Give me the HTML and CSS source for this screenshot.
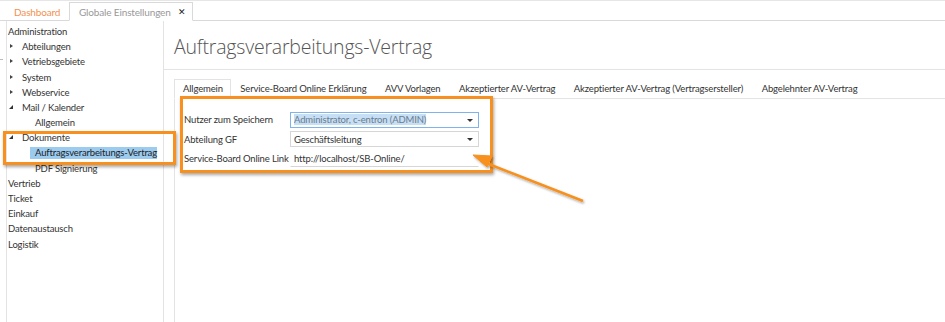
FILE: index.html
```html
<!DOCTYPE html>
<html lang="de">
<head>
    <meta charset="UTF-8">
    <title>Globale Einstellungen</title>
    <link rel="stylesheet" href="styles.css">
</head>
<body>
    <div class="doc-tabs">
        <div class="doc-tab doc-tab-link">Dashboard</div>
        <div class="doc-tab doc-tab-active">Globale Einstellungen <span class="close">&#x2715;</span></div>
    </div>

    <div class="layout">
        <div class="splitter-mark"></div>
        <div class="tree">
            <div class="node">Administration</div>
            <div class="node lvl1 collapsed">Abteilungen</div>
            <div class="node lvl1 collapsed">Vetriebsgebiete</div>
            <div class="node lvl1 collapsed">System</div>
            <div class="node lvl1 collapsed">Webservice</div>
            <div class="node lvl1 expanded">Mail / Kalender</div>
            <div class="node lvl2">Allgemein</div>
            <div class="node lvl1 expanded">Dokumente</div>
            <div class="node lvl2"><span class="selected">Auftragsverarbeitungs-Vertrag</span></div>
            <div class="node lvl2">PDF Signierung</div>
            <div class="node">Vertrieb</div>
            <div class="node">Ticket</div>
            <div class="node">Einkauf</div>
            <div class="node">Datenaustausch</div>
            <div class="node">Logistik</div>
        </div>

        <div class="content">
            <div class="page-header">
                <h1>Auftragsverarbeitungs-Vertrag</h1>
            </div>
            <div class="tab-strip">
                <div class="tab tab-active">Allgemein</div>
                <div class="tab">Service-Board Online Erklärung</div>
                <div class="tab">AVV Vorlagen</div>
                <div class="tab">Akzeptierter AV-Vertrag</div>
                <div class="tab">Akzeptierter AV-Vertrag (Vertragsersteller)</div>
                <div class="tab">Abgelehnter AV-Vertrag</div>
            </div>
            <div class="tab-panel">
                <div class="form-row">
                    <label>Nutzer zum Speichern</label>
                    <div class="combo combo-focus"><span class="sel-text">Administrator, c-entron (ADMIN)</span><span class="caret"></span></div>
                </div>
                <div class="form-row">
                    <label>Abteilung GF</label>
                    <div class="combo"><span>Geschäftsleitung</span><span class="caret"></span></div>
                </div>
                <div class="form-row">
                    <label>Service-Board Online Link</label>
                    <div class="textbox">http://localhost/SB-Online/</div>
                </div>
            </div>
        </div>
    </div>

    <!-- annotations -->
    <div class="mark mark-tree"></div>
    <div class="mark mark-form"></div>
    <svg class="arrow" width="945" height="322" viewBox="0 0 945 322">
        <defs>
            <filter id="sh" x="-10%" y="-10%" width="130%" height="130%">
                <feDropShadow dx="1" dy="1.5" stdDeviation="1" flood-color="#000" flood-opacity="0.35"/>
            </filter>
        </defs>
        <g filter="url(#sh)" fill="#f7901e" stroke="#f7901e">
            <line x1="583" y1="201" x2="486" y2="163" stroke-width="2.5"/>
            <polygon points="473,155 492,156 487,167" stroke-width="1" stroke-linejoin="round"/>
        </g>
    </svg>
</body>
</html>
```

FILE: styles.css
```css
body {
    margin: 0;
    width: 945px;
    height: 322px;
    overflow: hidden;
    font-family: Lato, "Open Sans", sans-serif;
    font-size: 9.5px;
    letter-spacing: -0.15px;
    color: #333;
    background: #fff;
    position: relative;
}

.doc-tabs {
    display: flex;
    align-items: flex-end;
    border-top: 1px solid #e6e6e6;
    border-bottom: 1px solid #d9d9d9;
    box-sizing: border-box;
    height: 21px;
}

.doc-tab {
    height: 18px;
    line-height: 18px;
    padding: 0 10px;
    box-sizing: border-box;
    margin-bottom: -1px;
    white-space: nowrap;
}

.doc-tab-link {
    color: #f39050;
    padding-left: 14px;
    width: 69px;
    font-size: 10px;
}

.doc-tab-active {
    display: flex;
    justify-content: space-between;
    color: #999;
    background: #fff;
    border: 1px solid #d9d9d9;
    border-bottom: 1px solid #fff;
    width: 124px;
    height: 19px;
    padding: 0 6px 0 9px;
    font-size: 10px;
}

.close {
    color: #222;
    font-size: 9px;
}

.layout {
    display: flex;
    height: 301px;
    padding-left: 6px;
}

.splitter-mark {
    position: absolute;
    left: 0;
    top: 59px;
    width: 3px;
    height: 1px;
    background: #bbb;
}

.tree {
    width: 156px;
    border-left: 1px solid #e3e3e3;
    border-right: 1px solid #e3e3e3;
    padding-top: 3px;
}

.node {
    height: 15.2px;
    line-height: 15.2px;
    padding-left: 1px;
    white-space: nowrap;
    position: relative;
    color: #333;
}

.lvl1 {
    padding-left: 15px;
}

.lvl2 {
    padding-left: 28px;
}

.collapsed::before {
    content: "";
    position: absolute;
    left: 3px;
    top: 5px;
    border-left: 3px solid #444;
    border-top: 2.5px solid transparent;
    border-bottom: 2.5px solid transparent;
}

.expanded::before {
    content: "";
    position: absolute;
    left: 2px;
    top: 5px;
    border-right: 4px solid #333;
    border-top: 4px solid transparent;
}

.selected {
    display: inline-block;
    vertical-align: top;
    margin-top: 1px;
    height: 12px;
    line-height: 12px;
    background: #9ccbf0;
    color: #222;
    padding-left: 5px;
    margin-left: -5px;
    width: 122px;
}

.content {
    flex: 1;
    display: flex;
    flex-direction: column;
}

.page-header {
    height: 49px;
    border-bottom: 1px solid #e3e3e3;
    box-sizing: border-box;
    padding-left: 10px;
}

h1 {
    margin: 0;
    padding-top: 11px;
    font-family: "Open Sans", sans-serif;
    font-weight: 300;
    font-size: 19.5px;
    color: #555;
    line-height: 30px;
    letter-spacing: -0.2px;
}

.tab-strip {
    display: flex;
    margin-top: 9px;
    margin-left: 10px;
    border-bottom: 1px solid #e3e3e3;
    height: 20px;
    box-sizing: border-box;
}

.tab {
    padding: 0 9.3px;
    line-height: 19px;
    height: 20px;
    box-sizing: border-box;
    white-space: nowrap;
}

.tab-active {
    border: 1px solid #e3e3e3;
    border-bottom: 1px solid #fff;
    background: #fff;
    padding: 0 8px;
    width: 57px;
    line-height: 18px;
}

.tab-panel {
    flex: 1;
    margin-left: 10px;
    border-left: 1px solid #e3e3e3;
    padding-top: 11px;
    padding-left: 9px;
}

.form-row {
    display: flex;
    align-items: center;
    height: 19.5px;
}

.form-row label {
    width: 106px;
    white-space: nowrap;
}

.combo,
.textbox {
    width: 189px;
    height: 16px;
    box-sizing: border-box;
    border: 1px solid #d6d6d6;
    display: flex;
    align-items: center;
    padding-left: 3px;
    position: relative;
    white-space: nowrap;
}

.combo-focus {
    border-color: #7eb4ea;
}

.sel-text {
    background: #c6dff5;
    color: #6a7c8c;
}

.caret {
    position: absolute;
    right: 5px;
    top: 6px;
    border-top: 3px solid #333;
    border-left: 3px solid transparent;
    border-right: 3px solid transparent;
}

.textbox {
    border-color: transparent transparent #d6d6d6 transparent;
}

.mark {
    position: absolute;
    border: 3px solid #f7901e;
    box-shadow: 1px 2px 3px rgba(0, 0, 0, 0.35);
    box-sizing: border-box;
}

.mark-tree {
    left: 3px;
    top: 131px;
    width: 173px;
    height: 34px;
}

.mark-form {
    left: 180px;
    top: 96px;
    width: 313px;
    height: 77px;
}

.arrow {
    position: absolute;
    left: 0;
    top: 0;
}
```
